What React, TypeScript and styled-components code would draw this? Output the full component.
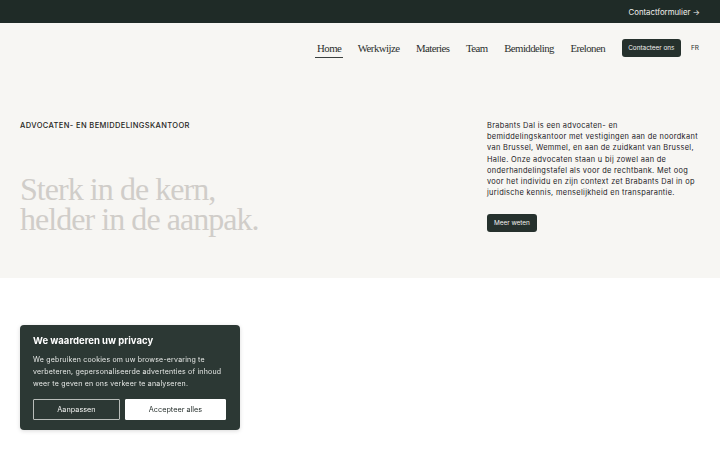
import React from "react";
import styled, { createGlobalStyle } from "styled-components";

const GlobalStyle = createGlobalStyle`
  html, body { margin: 0; padding: 0; background: #ffffff; }
  body { font-family: "Inter", "Noto Sans", sans-serif; color: #1f2a26; -webkit-font-smoothing: antialiased; }
  * { box-sizing: border-box; }
`;

const sans = `"Inter", "Noto Sans", sans-serif`;
const serif = `"Liberation Serif", "DejaVu Serif", serif`;

const TopBar = styled.div`
  height: 23px;
  background: #1f2b27;
  display: flex;
  align-items: center;
  justify-content: flex-end;
  padding: 0 20px;
`;

const TopLink = styled.a`
  font-family: ${sans};
  font-size: 7.8px;
  color: #f1f1ee;
  text-decoration: none;
`;

const Hero = styled.section`
  background: #f7f6f3;
  height: 255px;
  display: flex;
  flex-direction: column;
`;

const Nav = styled.nav`
  display: flex;
  justify-content: flex-end;
  align-items: center;
  padding: 16px 21px 0 0;
  height: 18px;
  gap: 14.6px;
  box-sizing: content-box;
`;

const NavItem = styled.a<{ $active?: boolean }>`
  font-family: ${serif};
  font-size: 10.8px;
  letter-spacing: -0.55px;
  color: #2b302e;
  text-decoration: none;
  position: relative;
  padding: 0 1px;
  &::after {
    content: "";
    display: ${(p) => (p.$active ? "block" : "none")};
    position: absolute;
    left: -1px;
    right: -1px;
    bottom: -4px;
    height: 1px;
    background: #3b403e;
  }
`;

const SmallButton = styled.a`
  font-family: ${sans};
  font-size: 6.4px;
  color: #f2f2ef;
  background: #26312d;
  border-radius: 3px;
  padding: 0 7px;
  height: 18px;
  display: inline-flex;
  align-items: center;
  text-decoration: none;
`;

const ContactButton = styled(SmallButton)`
  padding: 0 6.5px;
  margin-left: 1px;
`;

const Lang = styled.span`
  font-family: ${sans};
  font-size: 6.5px;
  color: #2b302e;
  margin-left: -4.6px;
`;

const HeroBody = styled.div`
  display: grid;
  grid-template-columns: 1fr 213px;
  padding: 63px 20px 0 20px;
`;

const LeftCol = styled.div`
  display: flex;
  flex-direction: column;
`;

const Eyebrow = styled.div`
  font-family: ${sans};
  font-size: 7.5px;
  font-weight: 500;
  letter-spacing: 0.38px;
  color: #1f2522;
  margin-top: 1px;
`;

const Heading = styled.h1`
  margin: 44px 0 0 0;
  font-family: ${serif};
  font-weight: 400;
  font-size: 32px;
  line-height: 30px;
  color: #d0cdc9;
  letter-spacing: -0.95px;
`;

const RightCol = styled.div`
  display: flex;
  flex-direction: column;
  align-items: flex-start;
`;

const Para = styled.p`
  margin: 0;
  font-family: ${sans};
  font-size: 7.4px;
  line-height: 11.2px;
  letter-spacing: 0.32px;
  white-space: nowrap;
  color: #1b201e;
`;

const MoreButton = styled(SmallButton)`
  margin-top: 16px;
`;

const CookieBox = styled.div`
  position: fixed;
  left: 20px;
  top: 325px;
  width: 220px;
  height: 105px;
  background: #2c3834;
  border-radius: 4px;
  padding: 10px 13px 0 13px;
  box-shadow: 0 1px 4px rgba(0, 0, 0, 0.15);
`;

const CookieTitle = styled.div`
  font-family: ${sans};
  font-weight: 700;
  font-size: 9.5px;
  color: #ffffff;
  margin-bottom: 8px;
`;

const CookieText = styled.p`
  margin: 0;
  font-family: ${sans};
  font-size: 7px;
  line-height: 12px;
  letter-spacing: 0.2px;
  color: #e6e8e6;
`;

const CookieActions = styled.div`
  display: grid;
  grid-template-columns: 87px 101px;
  gap: 5px;
  margin-top: 9px;
`;

const CookieButton = styled.button<{ $primary?: boolean }>`
  height: 21px;
  font-family: ${sans};
  font-size: 7.3px;
  cursor: pointer;
  border-radius: 1px;
  border: 1px solid ${(p) => (p.$primary ? "#ffffff" : "#b9bdba")};
  background: ${(p) => (p.$primary ? "#ffffff" : "transparent")};
  color: ${(p) => (p.$primary ? "#2a3330" : "#f1f2f0")};
`;

export default function App() {
  return (
    <>
      <GlobalStyle />
      <TopBar>
        <TopLink href="#">Contactformulier →</TopLink>
      </TopBar>
      <Hero>
        <Nav>
          <NavItem href="#" $active>Home</NavItem>
          <NavItem href="#">Werkwijze</NavItem>
          <NavItem href="#">Materies</NavItem>
          <NavItem href="#">Team</NavItem>
          <NavItem href="#">Bemiddeling</NavItem>
          <NavItem href="#">Erelonen</NavItem>
          <ContactButton href="#">Contacteer ons</ContactButton>
          <Lang>FR</Lang>
        </Nav>
        <HeroBody>
          <LeftCol>
            <Eyebrow>ADVOCATEN- EN BEMIDDELINGSKANTOOR</Eyebrow>
            <Heading>
              Sterk in de kern,
              <br />
              helder in de aanpak.
            </Heading>
          </LeftCol>
          <RightCol>
            <Para>
              Brabants Dal is een advocaten- en
              <br />
              bemiddelingskantoor met vestigingen aan de noordkant
              <br />
              van Brussel, Wemmel, en aan de zuidkant van Brussel,
              <br />
              Halle. Onze advocaten staan u bij zowel aan de
              <br />
              onderhandelingstafel als voor de rechtbank. Met oog
              <br />
              voor het individu en zijn context zet Brabants Dal in op
              <br />
              juridische kennis, menselijkheid en transparantie.
            </Para>
            <MoreButton href="#">Meer weten</MoreButton>
          </RightCol>
        </HeroBody>
      </Hero>
      <CookieBox>
        <CookieTitle>We waarderen uw privacy</CookieTitle>
        <CookieText>
          We gebruiken cookies om uw browse-ervaring te
          <br />
          verbeteren, gepersonaliseerde advertenties of inhoud
          <br />
          weer te geven en ons verkeer te analyseren.
        </CookieText>
        <CookieActions>
          <CookieButton>Aanpassen</CookieButton>
          <CookieButton $primary>Accepteer alles</CookieButton>
        </CookieActions>
      </CookieBox>
    </>
  );
}
